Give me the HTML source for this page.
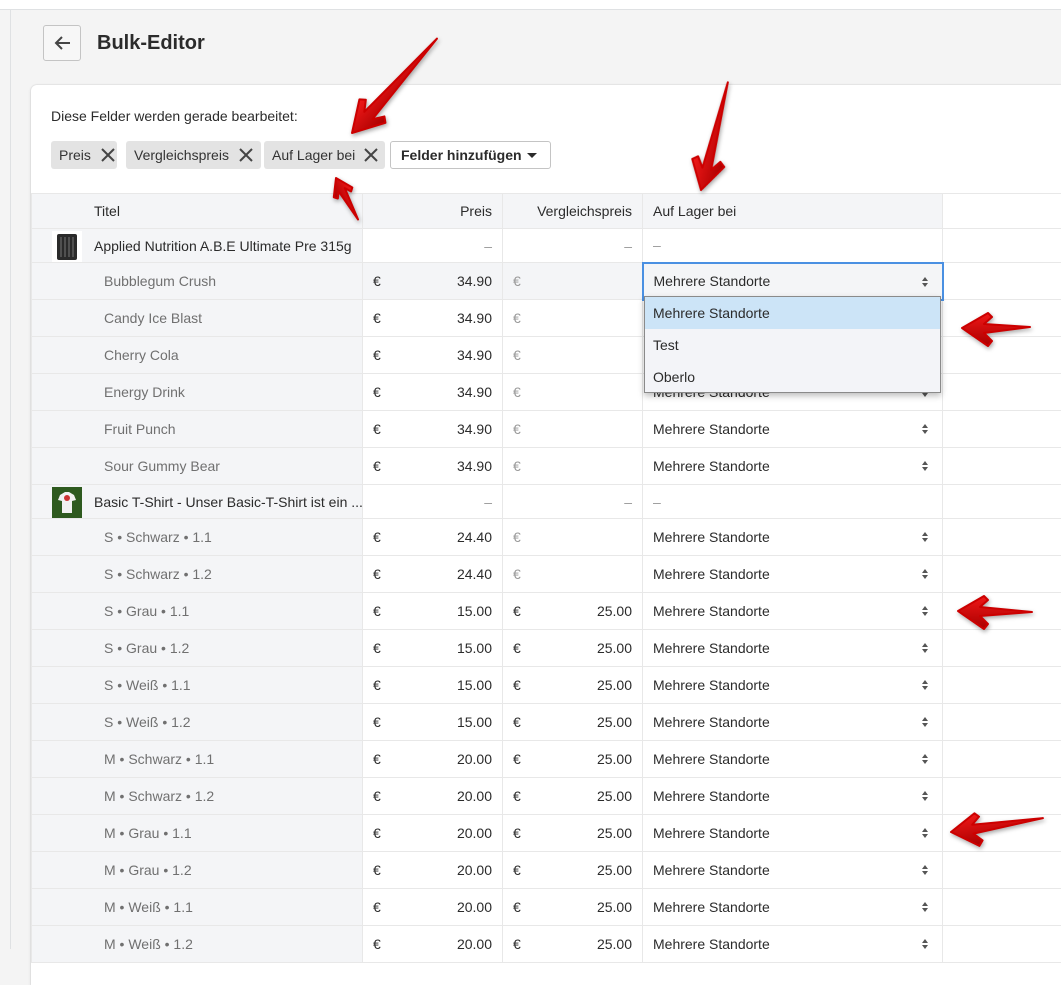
<!DOCTYPE html>
<html><head><meta charset="utf-8"><style>
*{box-sizing:border-box;margin:0;padding:0}
body{width:1061px;height:949px;overflow:hidden;background:#f4f4f4;font-family:"Liberation Sans",sans-serif;font-size:14px;color:#2b2b2b;position:relative}
.topbar{position:absolute;left:0;top:0;width:1061px;height:10px;background:#fff;border-bottom:1px solid #dfe1e3}
.side{position:absolute;left:10px;top:10px;width:1px;height:939px;background:#dfe1e3}
.back{position:absolute;left:43px;top:25px;width:38px;height:36px;border:1px solid #c4c4c4;border-radius:3px;background:#f7f7f7}
h1{position:absolute;left:97px;top:32px;font-size:20px;font-weight:bold;color:#2b2b2b}
.card{position:absolute;left:31px;top:85px;width:1040px;height:900px;background:#fff;border-radius:6px 0 0 0;box-shadow:0 0 0 1px rgba(63,63,68,.05),0 1px 3px rgba(63,63,68,.15)}
.lbl{position:absolute;left:51px;top:108px;font-size:14px;color:#2b2b2b}
.tag{position:absolute;top:141px;height:28px;background:#e3e3e3;border-radius:3px;padding:0 8px;line-height:28px;color:#333}
.tag svg{position:absolute;top:7px}
.btn{position:absolute;left:390px;top:141px;width:161px;height:28px;border:1px solid #c4c4c4;border-radius:3px;background:#fff;font-weight:bold;line-height:26px;padding-left:10px}
table{position:absolute;left:31px;top:193px;border-collapse:collapse;table-layout:fixed;width:1040px}
td{border:1px solid #e8e8e8;height:37px;padding:0 10px;white-space:nowrap;overflow:hidden;background:#fff}
td.t{background:#f4f5f7;color:#707070;padding-left:72px}
tr.p td.t{color:#2b2b2b;padding-left:62px;position:relative}
tr.h td{background:#f4f5f7;color:#2b2b2b;height:35px}
tr.p td{height:34px}
td.n{text-align:right}
.e{float:left}
.g{color:#999}
.sel{position:relative}
.sel:after{content:"";position:absolute;right:14px;top:13px;width:0;height:0;border-left:3px solid transparent;border-right:3px solid transparent;border-bottom:4px solid #555}
.sel:before{content:"";position:absolute;right:14px;top:19px;width:0;height:0;border-left:3px solid transparent;border-right:3px solid transparent;border-top:4px solid #555}
.thumb{position:absolute;left:20px;top:2px;width:30px;height:31px}
tr.act td{background:#f4f5f7}
.dd{position:absolute;left:644px;top:296px;width:297px;height:97px;background:#f3f4f8;border:1px solid #8a8a8a;box-shadow:0 3px 6px rgba(0,0,0,.25)}
.dd div{height:32px;line-height:32px;padding-left:8px;color:#2b2b2b}
.arr{position:absolute;left:0;top:0}
</style></head><body>
<div class="topbar"></div><div class="side"></div>
<div class="back"><svg width="38" height="36" viewBox="0 0 38 36"><path d="M26 17H12M18 11l-6 6 6 6" fill="none" stroke="#454545" stroke-width="2"/></svg></div>
<h1>Bulk-Editor</h1>
<div class="card"></div>
<div class="lbl">Diese Felder werden gerade bearbeitet:</div>
<div class="tag" style="left:51px;width:66px">Preis<svg style="left:50px" width="14" height="14"><path d="M1 1L13 13M13 1L1 13" stroke="#454545" stroke-width="2"/></svg></div>
<div class="tag" style="left:126px;width:135px">Vergleichspreis<svg style="left:113px" width="14" height="14"><path d="M1 1L13 13M13 1L1 13" stroke="#454545" stroke-width="2"/></svg></div>
<div class="tag" style="left:264px;width:121px">Auf Lager bei<svg style="left:100px" width="14" height="14"><path d="M1 1L13 13M13 1L1 13" stroke="#454545" stroke-width="2"/></svg></div>
<div class="btn">Felder hinzufügen<svg style="position:absolute;left:136px;top:11px" width="10" height="6"><path d="M0 0H10L5 5Z" fill="#2b2b2b"/></svg></div>

<table>
<colgroup><col style="width:331px"><col style="width:140px"><col style="width:140px"><col style="width:300px"><col style="width:129px"></colgroup>
<tr class="h"><td class="t" style="padding-left:62px;color:#2b2b2b">Titel</td><td class="n">Preis</td><td class="n">Vergleichspreis</td><td>Auf Lager bei</td><td style="background:#fff"></td></tr>
<tr class="p"><td class="t"><svg class="thumb" viewBox="0 0 30 31"><rect width="30" height="31" fill="#fff"/><rect x="5" y="3" width="20" height="26" rx="2" fill="#2a2a2a"/><path d="M9 6v20M13 6v20M17 6v20M21 6v20" stroke="#777"/></svg>Applied Nutrition A.B.E Ultimate Pre 315g</td><td class="n g">–</td><td class="n g">–</td><td class="g">–</td><td></td></tr>
<tr class="act"><td class="t">Bubblegum Crush</td><td class="n"><span class="e">€</span>34.90</td><td><span class="g">€</span></td><td class="sel" style="border:2px solid #4a90e2;background:#f4f5f7">Mehrere Standorte</td><td style="background:#fff"></td></tr>
<tr><td class="t">Candy Ice Blast</td><td class="n"><span class="e">€</span>34.90</td><td><span class="g">€</span></td><td class="sel">Mehrere Standorte</td><td></td></tr>
<tr><td class="t">Cherry Cola</td><td class="n"><span class="e">€</span>34.90</td><td><span class="g">€</span></td><td class="sel">Mehrere Standorte</td><td></td></tr>
<tr><td class="t">Energy Drink</td><td class="n"><span class="e">€</span>34.90</td><td><span class="g">€</span></td><td class="sel">Mehrere Standorte</td><td></td></tr>
<tr><td class="t">Fruit Punch</td><td class="n"><span class="e">€</span>34.90</td><td><span class="g">€</span></td><td class="sel">Mehrere Standorte</td><td></td></tr>
<tr><td class="t">Sour Gummy Bear</td><td class="n"><span class="e">€</span>34.90</td><td><span class="g">€</span></td><td class="sel">Mehrere Standorte</td><td></td></tr>
<tr class="p"><td class="t"><svg class="thumb" viewBox="0 0 30 31"><rect width="30" height="31" fill="#2e5a1f"/><path d="M8 8l5-3h4l5 3 2 5-4 1v12H10V14l-4-1z" fill="#f2f2f2"/><circle cx="15" cy="11" r="3" fill="#c33"/></svg>Basic T-Shirt - Unser Basic-T-Shirt ist ein ...</td><td class="n g">–</td><td class="n g">–</td><td class="g">–</td><td></td></tr>
<tr><td class="t">S • Schwarz • 1.1</td><td class="n"><span class="e">€</span>24.40</td><td><span class="g">€</span></td><td class="sel">Mehrere Standorte</td><td></td></tr>
<tr><td class="t">S • Schwarz • 1.2</td><td class="n"><span class="e">€</span>24.40</td><td><span class="g">€</span></td><td class="sel">Mehrere Standorte</td><td></td></tr>
<tr><td class="t">S • Grau • 1.1</td><td class="n"><span class="e">€</span>15.00</td><td class="n"><span class="e">€</span>25.00</td><td class="sel">Mehrere Standorte</td><td></td></tr>
<tr><td class="t">S • Grau • 1.2</td><td class="n"><span class="e">€</span>15.00</td><td class="n"><span class="e">€</span>25.00</td><td class="sel">Mehrere Standorte</td><td></td></tr>
<tr><td class="t">S • Weiß • 1.1</td><td class="n"><span class="e">€</span>15.00</td><td class="n"><span class="e">€</span>25.00</td><td class="sel">Mehrere Standorte</td><td></td></tr>
<tr><td class="t">S • Weiß • 1.2</td><td class="n"><span class="e">€</span>15.00</td><td class="n"><span class="e">€</span>25.00</td><td class="sel">Mehrere Standorte</td><td></td></tr>
<tr><td class="t">M • Schwarz • 1.1</td><td class="n"><span class="e">€</span>20.00</td><td class="n"><span class="e">€</span>25.00</td><td class="sel">Mehrere Standorte</td><td></td></tr>
<tr><td class="t">M • Schwarz • 1.2</td><td class="n"><span class="e">€</span>20.00</td><td class="n"><span class="e">€</span>25.00</td><td class="sel">Mehrere Standorte</td><td></td></tr>
<tr><td class="t">M • Grau • 1.1</td><td class="n"><span class="e">€</span>20.00</td><td class="n"><span class="e">€</span>25.00</td><td class="sel">Mehrere Standorte</td><td></td></tr>
<tr><td class="t">M • Grau • 1.2</td><td class="n"><span class="e">€</span>20.00</td><td class="n"><span class="e">€</span>25.00</td><td class="sel">Mehrere Standorte</td><td></td></tr>
<tr><td class="t">M • Weiß • 1.1</td><td class="n"><span class="e">€</span>20.00</td><td class="n"><span class="e">€</span>25.00</td><td class="sel">Mehrere Standorte</td><td></td></tr>
<tr><td class="t">M • Weiß • 1.2</td><td class="n"><span class="e">€</span>20.00</td><td class="n"><span class="e">€</span>25.00</td><td class="sel">Mehrere Standorte</td><td></td></tr>
</table>

<div class="dd"><div style="background:#cce4f7">Mehrere Standorte</div><div>Test</div><div>Oberlo</div></div>

<svg class="arr" width="1061" height="949">
<defs>
<linearGradient id="rg" x1="0" y1="0" x2="0" y2="1"><stop offset="0" stop-color="#f01818"/><stop offset="1" stop-color="#a80000"/></linearGradient>
</defs>
<g fill="url(#rg)" style="filter:drop-shadow(1px 2px 2px rgba(0,0,0,.35))" stroke="#c00" stroke-width="2" stroke-linejoin="round">
<g transform="translate(962,328)"><polygon points="0,0 26,-15 30,-11 22,-4 68,-1 22,5 30,13 26,18"/></g>
<g transform="translate(958,611)"><polygon points="0,0 26,-15 30,-11 22,-4 74,1 22,5 30,13 26,18"/></g>
<g transform="translate(951,832) rotate(-8.6)"><polygon points="0,0 26,-15 30,-11 22,-4 93,0 22,5 30,13 26,18"/></g>
<g transform="translate(352,133) rotate(-48)"><polygon points="0,0 30,-17 34,-12 24,-5 127,0 24,6 34,13 30,18"/></g>
<g transform="translate(701,190) rotate(-76)"><polygon points="0,0 28,-16 32,-11 22,-4 111,0 22,5 32,12 28,17"/></g>
<g transform="translate(336,178) rotate(62)"><polygon points="0,0 16,-10 19,-7 13,-3 47,0 13,4 19,8 16,11"/></g>
</g>
</svg>
</body></html>
